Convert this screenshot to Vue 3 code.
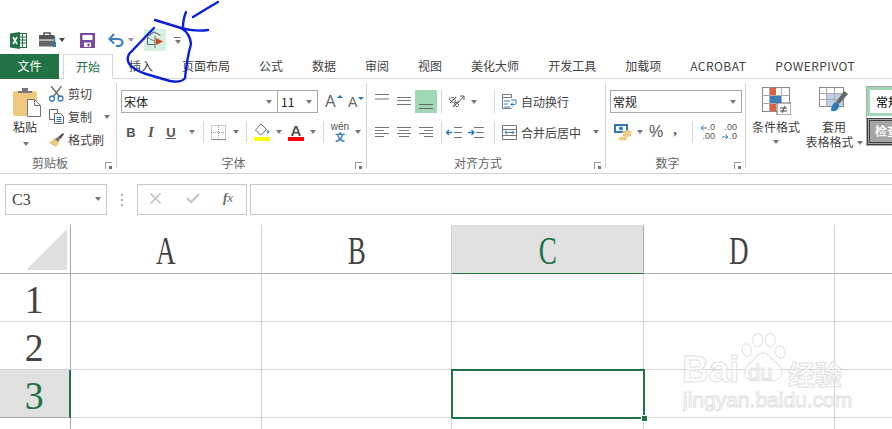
<script setup>
const tabs = ['插入','页面布局','公式','数据','审阅','视图','美化大师','开发工具','加载项','ACROBAT','POWERPIVOT']
const cols = ['A','B','C','D','']
const rows = ['1','2','3','']
const isLatin = (t) => /^[A-Z]+$/.test(t)
</script>

<template>
  <div class="app">
    <div class="qat">
      <svg class="i-excel" width="17" height="17" viewBox="0 0 17 17">
        <rect x="6.5" y="1.5" width="10" height="14" fill="#fff" stroke="#217346"/>
        <path d="M10 5h6M10 8h6M10 11h6M12.500 2v13" stroke="#217346" fill="none"/>
        <path d="M0 1.500 10 0v17L0 15.500z" fill="#217346"/>
        <path d="M3 5l4 7M7 5l-4 7" stroke="#fff" stroke-width="1.600" fill="none"/>
      </svg>
      <svg class="i-tool" width="20" height="16" viewBox="0 0 20 16">
        <path d="M5 3V1h6v2" fill="none" stroke="#555" stroke-width="1.500"/>
        <rect x="0" y="3" width="15" height="4.500" fill="#555"/>
        <rect x="0" y="8.500" width="15" height="6" fill="#666"/>
        <path d="M15.500 4v6" stroke="#2f7ab8" stroke-width="1.500"/>
        <path d="M15.500 10v5" stroke="#2f7ab8" stroke-width="3"/>
      </svg>
      <span class="caret dark c-tool"></span>
      <svg class="i-save" width="15" height="15" viewBox="0 0 15 15">
        <path d="M.5.500h14v14H.500z" fill="#fff" stroke="#7b4a9e"/>
        <path d="M0 0h15v15H0zM2.500 2v5h10V2zM4 9.500V15h7V9.500z" fill="#7b4a9e" fill-rule="evenodd"/>
        <rect x="7.500" y="10.500" width="2" height="3" fill="#7b4a9e"/>
      </svg>
      <svg class="i-undo" width="16" height="14" viewBox="0 0 16 14">
        <path d="M2 6h8c3 0 4.500 1.800 4.500 3.500S13 13 10 13H8" fill="none" stroke="#3f7fb8" stroke-width="2.200"/>
        <path d="M6 1 1.500 6 6 10.500" fill="none" stroke="#3f7fb8" stroke-width="2"/>
      </svg>
      <span class="caret c-undo"></span>
      <span class="macro">
        <svg width="22" height="22" viewBox="0 0 22 22">
          <path d="M3.500 7.500 10 3l6.500 3.500" fill="none" stroke="#777" stroke-width="1.200"/>
          <path d="M3.500 7.500v8h7.500" fill="none" stroke="#666"/>
          <path d="M3.500 8.500 11 12.500" fill="none" stroke="#888"/>
          <path d="M11 7v12" stroke="#666"/>
          <path d="M12 9 19 12.500 12 16z" fill="#d24726"/>
        </svg>
      </span>
      <span class="qat-more"><i></i><span class="caret"></span></span>
    </div>

    <div class="tabbar">
      <span class="file">文件</span>
      <span class="tab active">开始</span>
      <span v-for="t in tabs" :key="t" class="tab" :class="{ latin: isLatin(t) }">{{ t }}</span>
    </div>

    <div class="ribbon">
      <section class="group g1">
        <div class="body clip">
          <div class="paste">
            <svg width="28" height="29" viewBox="0 0 28 29">
              <rect x="0" y="3" width="24" height="25" rx="2" fill="#edc87e"/>
              <path d="M5 5V3h4V0h6v3h4v2z" fill="#777"/>
              <path d="M14.500 11.500h7l6 6v11h-13z" fill="#fff" stroke="#777"/>
              <path d="M21.500 11.500v6h6" fill="none" stroke="#777"/>
            </svg>
            <span class="paste-t">粘贴</span>
            <span class="caret"></span>
          </div>
          <div class="clip-list">
            <div class="clip-row">
              <svg width="15" height="16" viewBox="0 0 15 16">
                <path d="M2 0l9 11M12.500 0 4 11" stroke="#666" stroke-width="1.300" fill="none"/>
                <circle cx="3" cy="12.500" r="2.500" fill="none" stroke="#2f7ab8" stroke-width="1.300"/>
                <circle cx="11.500" cy="12.500" r="2.500" fill="none" stroke="#2f7ab8" stroke-width="1.300"/>
              </svg>
              <span>剪切</span>
            </div>
            <div class="clip-row">
              <svg width="15" height="15" viewBox="0 0 15 15">
                <path d="M.5.500h8v10h-8z" fill="#fff" stroke="#666"/>
                <path d="M5.500 4.500h6l3 3v7h-9z" fill="#fff" stroke="#666"/>
                <path d="M7.500 8.500h5M7.500 10.500h5M7.500 12.500h5" stroke="#2f7ab8"/>
              </svg>
              <span>复制</span>
              <span class="caret c-copy"></span>
            </div>
            <div class="clip-row">
              <svg width="15" height="14" viewBox="0 0 15 14">
                <path d="M0 10 6 5l4 5-3 4z" fill="#edc87e"/>
                <path d="M6 6l3-2 2 3-2 2z" fill="#777"/>
                <path d="M9 4l5-4 1 1.500-4 5z" fill="#555"/>
              </svg>
              <span>格式刷</span>
            </div>
          </div>
        </div>
        <div class="label">剪贴板<span class="launcher"></span></div>
      </section>

      <section class="group g2">
        <div class="body">
          <div class="row r1 pad4">
            <span class="select font-name"><span>宋体</span><span class="caret"></span></span>
            <span class="select font-size"><span>11</span><span class="caret"></span></span>
            <span class="grow-a big">A<i class="up"></i></span>
            <span class="grow-a small">A<i class="down"></i></span>
          </div>
          <div class="row r2 pad4">
            <span class="cell w20 fmt">B</span>
            <span class="cell w20 fmt it">I</span>
            <span class="cell w20 fmt un">U</span>
            <span class="cell w22"><span class="caret"></span></span>
            <i class="sep"></i>
            <span class="cell w28">
              <svg width="15" height="15" viewBox="0 0 15 15">
                <path d="M.5.500h14v14H.500zM7.500 0v15M0 7.500h15" fill="none" stroke="#999" stroke-dasharray="1 1"/>
                <path d="M0 14.500h15" stroke="#888"/>
              </svg>
            </span>
            <span class="cell w8"><span class="caret"></span></span>
            <span class="w6"></span>
            <i class="sep"></i>
            <span class="cell w30">
              <svg width="17" height="19" viewBox="0 0 17 19">
                <path d="M7 1 1.500 7l5 5 6-5.500z" fill="#fff" stroke="#666"/>
                <path d="M13.500 6.500c1.500 2 2 3 1 3.800-1 .7-2-.5-1-3.800" fill="#2f7ab8"/>
                <rect x="0" y="14" width="16" height="4" fill="#ffff00"/>
              </svg>
            </span>
            <span class="cell w4"><span class="caret"></span></span>
            <span class="cell w30 font-color"><b>A</b><i></i></span>
            <span class="cell w4"><span class="caret"></span></span>
            <span class="w8"></span>
            <i class="sep"></i>
            <span class="cell w32 wen"><em>wén</em><b>文</b></span>
            <span class="cell w4"><span class="caret"></span></span>
          </div>
        </div>
        <div class="label">字体<span class="launcher"></span></div>
      </section>

      <section class="group g3">
        <div class="body">
          <div class="row r1">
            <span class="cell w22 al top"><svg width="14" height="14" viewBox="0 0 14 14"><path d="M0 1.500h14M0 6h14" stroke="#777"/></svg></span>
            <span class="cell w22 al"><svg width="14" height="14" viewBox="0 0 14 14"><path d="M0 2.500h14M0 5.500h14M0 9.500h14" stroke="#777"/></svg></span>
            <span class="cell w22 al on"><svg width="14" height="14" viewBox="0 0 14 14"><path d="M0 9.500h14M0 13.500h14" stroke="#666"/></svg></span>
            <span class="w4"></span>
            <i class="sep tall"></i>
            <span class="cell w28">
              <svg width="17" height="15" viewBox="0 0 17 15">
                <path d="M2 9l6-6M5 13l6-6" stroke="#777" stroke-width="1.400" fill="none"/>
                <path d="M1 5l4 4 3-2-3-4zM6 10l3 3 2-2-3-3z" fill="none" stroke="#777"/>
                <path d="M10 9l6-7M12 2h4v4" stroke="#666" fill="none"/>
              </svg>
            </span>
            <span class="cell w8"><span class="caret"></span></span>
            <span class="w16"></span>
            <i class="sep tall"></i>
            <span class="wrap-btn">
              <svg width="15" height="15" viewBox="0 0 15 15">
                <path d="M.5.500h9v3h-9zM.5 3.500v11h9" fill="none" stroke="#777"/>
                <path d="M2 7h6M2 10h4M2 13h6" stroke="#2f7ab8"/>
                <path d="M9 6h5v3c0 1-.5 1.500-1.500 1.500H9M11 8.500l-2 2 2 2" fill="none" stroke="#2f7ab8"/>
              </svg>
              <span>自动换行</span>
            </span>
          </div>
          <div class="row r2">
            <span class="cell w22 al"><svg width="14" height="14" viewBox="0 0 14 14"><path d="M0 2.500h14M0 5.500h9M0 8.500h14M0 11.500h9" stroke="#777"/></svg></span>
            <span class="cell w22 al"><svg width="14" height="14" viewBox="0 0 14 14"><path d="M0 2.500h14M2 5.500h10M0 8.500h14M2 11.500h10" stroke="#777"/></svg></span>
            <span class="cell w22 al"><svg width="14" height="14" viewBox="0 0 14 14"><path d="M0 2.500h14M5 5.500h9M0 8.500h14M5 11.500h9" stroke="#777"/></svg></span>
            <span class="w4"></span>
            <i class="sep tall"></i>
            <span class="cell w24"><svg width="16" height="11" viewBox="0 0 16 11"><path d="M8 .5h8M8 5.500h8M8 10.500h8" stroke="#777"/><path d="M0 5.500h6M3 3 .5 5.500 3 8" fill="none" stroke="#2f7ab8" stroke-width="1.300"/></svg></span>
            <span class="cell w20"><svg width="16" height="11" viewBox="0 0 16 11"><path d="M6 .5h10M8 5.500h8M6 10.500h10" stroke="#777"/><path d="M0 5.500h6M3.500 3 6 5.500 3.500 8" fill="none" stroke="#2f7ab8" stroke-width="1.300"/></svg></span>
            <span class="w8"></span>
            <i class="sep tall"></i>
            <span class="wrap-btn">
              <svg width="15" height="15" viewBox="0 0 15 15">
                <path d="M.5.500h14v14H.500zM0 4.500h15M0 10.500h15" fill="none" stroke="#777"/>
                <path d="M3 7.500h9M5 5.500l-2 2 2 2M10 5.500l2 2-2 2" fill="none" stroke="#2f7ab8"/>
              </svg>
              <span>合并后居中</span>
              <span class="caret c-merge"></span>
            </span>
          </div>
        </div>
        <div class="label">对齐方式<span class="launcher"></span></div>
      </section>

      <section class="group g4">
        <div class="body">
          <div class="row r1 pad4">
            <span class="select num"><span>常规</span><span class="caret"></span></span>
          </div>
          <div class="row r2 pad4">
            <span class="cell w26">
              <svg width="18" height="17" viewBox="0 0 18 17">
                <rect x="0" y="0" width="14" height="9" fill="#2f7ab8"/>
                <rect x="2" y="2" width="10" height="5" fill="#fff"/>
                <circle cx="7" cy="4.500" r="2" fill="#2f7ab8"/>
                <ellipse cx="13" cy="8" rx="4.500" ry="1.800" fill="#edc87e"/>
                <ellipse cx="13" cy="11" rx="4.500" ry="1.800" fill="#edc87e"/>
                <ellipse cx="9" cy="14.500" rx="4.500" ry="1.800" fill="#edc87e"/>
              </svg>
            </span>
            <span class="cell w8"><span class="caret"></span></span>
            <span class="cell w24 pct">%</span>
            <span class="cell w14 comma">,</span>
            <span class="w10"></span>
            <i class="sep"></i>
            <span class="cell w22 dec"><span><svg width="7" height="6" viewBox="0 0 7 6"><path d="M7 3H1M3.500.5 1 3l2.500 2.500" fill="none" stroke="#2f7ab8"/></svg>.0</span><span>.00</span></span>
            <span class="cell w22 dec"><span>.00</span><span><svg width="7" height="6" viewBox="0 0 7 6"><path d="M0 3h6M3.500.5 6 3 3.500 5.500" fill="none" stroke="#2f7ab8"/></svg>.0</span></span>
          </div>
        </div>
        <div class="label">数字<span class="launcher"></span></div>
      </section>

      <section class="styles">
        <div class="style-btn b1">
          <svg width="29" height="28" viewBox="0 0 29 28">
            <rect x=".5" y=".5" width="27" height="24" fill="#fff" stroke="#888"/>
            <path d="M0 8.500h28M0 16.500h28M7.500 0v25M19.500 0v25" stroke="#aaa"/>
            <rect x="8" y="1" width="6" height="7" fill="#e0603a"/>
            <rect x="8" y="9" width="11" height="7" fill="#3f7fb8"/>
            <rect x="8" y="17" width="6" height="7" fill="#e0603a"/>
            <rect x="15" y="16" width="14" height="12" fill="#fff" stroke="#666"/>
            <path d="M18 21h7M18 24h7M23 19l-3 7" stroke="#444" fill="none"/>
          </svg>
          <span>条件格式</span>
          <span class="caret"></span>
        </div>
        <div class="style-btn b2">
          <svg width="30" height="29" viewBox="0 0 30 29">
            <rect x=".5" y=".5" width="24" height="19" fill="#fff" stroke="#888"/>
            <rect x="7" y="6" width="17" height="13" fill="#bdd0e6"/>
            <path d="M0 6.500h24M0 12.500h24M7.500 0v20M15.500 0v20" stroke="#aaa"/>
            <path d="M29 7 20 17l-3-2 8-11z" fill="#666"/>
            <path d="M17 15c-3 1-4 4-5 7-1 3 5 3 7 0 1-2 1-4 1-5z" fill="#2f7ab8"/>
          </svg>
          <span class="l2">套用</span>
          <span>表格格式<span class="caret c-table"></span></span>
        </div>
        <div class="gallery">
          <span class="sw s1">常规</span>
          <span class="sw s2">检查</span>
        </div>
      </section>
    </div>

    <div class="formula">
      <div class="namebox"><span>C3</span><span class="caret"></span></div>
      <span class="dots"><i></i><i></i><i></i></span>
      <div class="fxbox">
        <svg width="11" height="11" viewBox="0 0 11 11"><path d="M.5.500l10 10M10.500.500l-10 10" stroke="#c8c8c8" stroke-width="1.600"/></svg>
        <svg class="fx-check" width="14" height="11" viewBox="0 0 14 11"><path d="M1 5l4 4 8-8" fill="none" stroke="#c8c8c8" stroke-width="2.400"/></svg>
        <em class="fx-t"><b>f</b>x</em>
      </div>
      <div class="input"></div>
    </div>

    <div class="sheet">
      <div class="corner"><i></i></div>
      <div v-for="c in cols" :key="c" class="ch" :class="{ sel: c === 'C' }">
        <span class="glyph">{{ c }}</span>
      </div>
      <template v-for="r in rows" :key="r">
        <div class="rh" :class="{ sel: r === '3' }"><span class="glyph">{{ r }}</span></div>
        <div v-for="c in cols" :key="c + r" class="cd">
          <template v-if="c === 'C' && r === '3'">
            <i class="cursor"></i><i class="handle"></i>
          </template>
        </div>
      </template>
    </div>

    <div class="watermark">
      <span class="wm-bai">Bai</span>
      <svg class="wm-paw" width="46" height="54" viewBox="0 0 50 60">
        <g fill="#fff" fill-opacity=".6" stroke="#e4e4e4" stroke-width="1.300">
          <ellipse cx="7" cy="19" rx="5" ry="7" transform="rotate(-15 7 19)"/>
          <ellipse cx="19" cy="8" rx="5.500" ry="7.500"/>
          <ellipse cx="33" cy="8" rx="5.500" ry="7.500"/>
          <ellipse cx="44" cy="21" rx="5.500" ry="7" transform="rotate(-20 44 21)"/>
          <path d="M25 22c-7 0-9 8-15 12-6 5-8 14 0 18 7 3 11 0 15 0s9 3 16 0c7-4 6-13 0-18-7-4-8-12-16-12z"/>
        </g>
      </svg>
      <span class="wm-du">du</span>
      <span class="wm-cn">经验</span>
      <span class="wm-url">jingyan.baidu.com</span>
    </div>

    <svg class="scribble" width="230" height="90" viewBox="0 0 230 90">
      <g fill="none" stroke="#0a1fd6" stroke-width="2.400" stroke-linecap="round" stroke-linejoin="round">
        <path d="M154 28 129 54Q126 60 130 65 136 71 146 74L170 81Q182 83 185 78 187 58 191 44 190 33 181 28L155 20"/>
        <path d="M181 28Q195 32 208 30"/>
        <path d="M186 12Q183 19 183 28"/>
        <path d="M193 17Q206 9 218 2"/>
      </g>
    </svg>
  </div>
</template>

<style>
html, body { margin: 0; background: #fff; overflow: hidden; }
</style>

<style scoped>
.app { position: relative; width: 892px; height: 429px; overflow: hidden; background: #fff;
  font-family: "Noto Sans CJK SC", "Noto Sans", sans-serif; font-size: 12px; color: #444; }
i, em { font-style: normal; display: block; }

.caret { display: inline-block; width: 0; height: 0; border: 3.5px solid transparent; border-top: 4px solid #777; border-bottom: 0; flex: none; }
.caret.dark { border-top-color: #444; }

.qat { height: 28px; padding-top: 26px; display: flex; align-items: center; padding-left: 10px; }
.i-tool { margin-left: 12px; }
.i-save { margin-left: 15px; }
.i-undo { margin-left: 13px; }
.c-undo { margin-left: 4px; border-top-color: #999; }
.macro { width: 22px; height: 22px; margin-left: 10px; background: #d3f0e0; display: flex; }
.qat-more { margin-left: 8px; display: flex; flex-direction: column; align-items: center; gap: 2px; }
.qat-more i { width: 7px; height: 1px; background: #777; }

.tabbar { height: 25px; display: flex; border-bottom: 1px solid #d4d4d4; box-sizing: border-box; }
.file { width: 59px; background: #217346; color: #fff; text-align: center; line-height: 24px; height: 25px; }
.tab { padding: 0 14.500px; line-height: 23px; white-space: nowrap; }
.tab.latin { letter-spacing: .46px; }
.tab.active { margin-left: 4px; margin-right: 1.500px; padding: 0 12px; color: #217346; background: #fff; height: 25px;
  border: 1px solid #d4d4d4; border-bottom: 0; box-sizing: border-box; }

.ribbon { height: 95px; box-sizing: border-box; padding-top: 4px; display: flex; border-bottom: 1px solid #d4d4d4; }
.group { height: 85px; box-sizing: border-box; border-right: 1px solid #d4d4d4; display: flex; flex-direction: column; flex: none; }
.g1 { width: 117px; } .g2 { width: 250px; } .g3 { width: 239px; } .g4 { width: 140px; }
.body { height: 72px; flex: none; }
.label { position: relative; height: 13px; line-height: 15px; text-align: center; color: #666; padding-right: 16px; }
.launcher { position: absolute; right: 4px; bottom: -1px; width: 6px; height: 6px; border-left: 1px solid #999; border-top: 1px solid #999; }
.launcher::after { content: ""; position: absolute; right: 0; bottom: 0; width: 3px; height: 3px; background: #777; }

.clip { display: flex; }
.paste { width: 49px; box-sizing: border-box; padding: 5px 0 0 13px; display: flex; flex-direction: column; }
.paste-t { margin-top: 1px; line-height: 18px; color: #333; }
.paste .caret { margin: 6px 0 0 10px; }
.clip-list { display: flex; flex-direction: column; margin-top: -1px; }
.clip-row { height: 23px; display: flex; align-items: center; gap: 4px; color: #444; }
.c-copy { margin-left: 8px; }

.row { display: flex; align-items: center; }
.r1 { height: 23px; margin-top: 7px; }
.r2 { height: 22px; margin-top: 8px; }
.pad4 { padding-left: 4px; }

.select { height: 23px; box-sizing: border-box; border: 1px solid #ababab; display: flex; align-items: center; justify-content: space-between; padding: 0 5px 0 2px; color: #222; background: #fff; }
.font-name { width: 157px; }
.font-size { width: 40px; border-left-width: 0; padding-left: 3px; }
.num { width: 132px; }
.grow-a { position: relative; display: block; color: #666; font-family: "Liberation Sans", sans-serif; }
.big { font-size: 16px; margin-left: 7px; width: 23px; }
.small { font-size: 14px; width: 16px; }
.grow-a i { position: absolute; right: 5px; width: 0; height: 0; border: 3px solid transparent; }
.small i { right: 0; }
.up { top: 2px; border-bottom: 3px solid #2f7ab8 !important; border-top: 0 !important; }
.down { top: 3px; border-top: 3px solid #2f7ab8 !important; border-bottom: 0 !important; }

.cell { display: flex; align-items: center; justify-content: center; height: 22px; flex: none; }
.w4 { width: 4px; flex: none; } .w6 { width: 6px; flex: none; } .w8 { width: 8px; flex: none; } .w10 { width: 10px; flex: none; } .w16 { width: 16px; flex: none; }
.w14 { width: 14px; } .w20 { width: 20px; } .w22 { width: 22px; } .w24 { width: 24px; } .w26 { width: 26px; } .w28 { width: 28px; } .w30 { width: 30px; } .w32 { width: 32px; }
.fmt { font-family: "Liberation Sans", sans-serif; font-size: 13px; font-weight: 700; color: #555; }
.it { font-family: "Liberation Serif", serif; font-style: italic; font-size: 15px; }
.un { text-decoration: underline; }
.sep { width: 1px; height: 22px; background: #d8d8d8; flex: none; }
.sep.tall { height: 23px; }
.font-color { flex-direction: column; }
.font-color b { font: 700 15px/13px "Liberation Sans", sans-serif; color: #555; }
.font-color i { width: 16px; height: 4px; background: #f00; }
.wen { flex-direction: column; line-height: 10px; }
.wen em { font: 10px/10px "Liberation Sans", sans-serif; color: #555; }
.wen b { font-size: 10px; line-height: 10px; color: #2f7ab8; }

.g3 .row > .al:first-child { margin-left: 4px; }
.al.top { padding-bottom: 4px; box-sizing: border-box; }
.al.on { background: #a0d8b5; height: 23px; }
.wrap-btn { display: flex; align-items: center; gap: 4px; margin-left: 7px; color: #444; }
.c-merge { margin-left: 8px; }

.pct { font: 400 16px "Liberation Sans", sans-serif; color: #555; }
.comma { font: 700 15px "Liberation Serif", serif; color: #555; padding-bottom: 6px; height: 16px; }
.dec { flex-direction: column; font: 9px/9px "Liberation Sans", sans-serif; color: #555; align-items: flex-end; }
.dec span { display: flex; align-items: center; }

.styles { flex: 1; min-width: 0; display: flex; height: 85px; }
.style-btn { display: flex; flex-direction: column; align-items: center; line-height: 15px; color: #444; flex: none; }
.b1 { width: 58px; padding: 4px 0 0 2px; box-sizing: border-box; }
.b1 span:first-of-type { margin-top: 4px; }
.b1 .caret { margin-top: 6px; }
.b2 { width: 60px; padding-top: 4px; box-sizing: border-box; }
.b2 .l2 { margin-top: 3px; }
.c-table { margin-left: 3px; vertical-align: 2px; }
.gallery { margin: 3px 0 0 2px; width: 40px; height: 60px; box-sizing: border-box; border: 1px solid #aaa; display: flex; flex-direction: column; flex: none; overflow: hidden; }
.sw { display: block; color: #000; white-space: nowrap; }
.s1 { height: 29px; line-height: 24px; border: 3px solid #a0d8b5; box-sizing: border-box; padding-left: 6px; }
.s2 { flex: 1; margin-top: 2px; background: #a5a5a5; border: 3px double #3f3f3f; box-sizing: border-box; color: #fff; line-height: 20px; padding-left: 5px; font-weight: 700; }

.formula { height: 51px; box-sizing: border-box; padding: 10px 0 10px 5px; display: flex; align-items: stretch; }
.namebox { width: 102px; height: 31px; box-sizing: border-box; border: 1px solid #c8c8c8; display: flex; align-items: center; justify-content: space-between; padding: 0 5px 0 6px; font: 16px "Liberation Serif", serif; color: #444; }
.namebox .caret { border-width: 4px 3.500px 0; border-top-color: #777; margin-bottom: 2px; }
.dots { width: 30px; display: flex; flex-direction: column; align-items: center; justify-content: center; gap: 3px; }
.dots i { width: 2px; height: 2px; background: #aaa; }
.fxbox { width: 110px; height: 31px; box-sizing: border-box; border: 1px solid #c8c8c8; display: flex; align-items: center; padding: 0 0 3px 12px; }
.fx-check { margin-left: 25px; }
.fx-t { margin-left: 23px; font: italic 13px "Liberation Serif", serif; color: #666; }
.fx-t b { display: inline; font-weight: 700; }
.input { flex: 1; height: 31px; box-sizing: border-box; margin-left: 3px; border: 1px solid #c8c8c8; border-right: 0; }

.sheet { display: grid; grid-template-columns: 71px 191px 190px 192px 191px 58px; grid-template-rows: 49px 48px 48px 48px 12px; }
.corner { border-right: 1px solid #ababab; border-bottom: 1px solid #ababab; box-sizing: border-box; position: relative; }
.corner i { position: absolute; left: 26px; top: 4px; width: 41px; height: 41px; background: #dfdfdf; clip-path: polygon(100% 0, 100% 100%, 0 100%); }
.ch { border-right: 1px solid #d4d4d4; border-bottom: 1px solid #ababab; box-sizing: border-box; display: flex; align-items: center; justify-content: center; color: #444; padding-top: 2px; }
.ch.sel { background: #e1e1e1; color: #217346; border-bottom-color: #217346; border-right-color: #ababab; }
.ch .glyph { transform: scaleX(.66); }
.rh { border-right: 1px solid #ababab; border-bottom: 1px solid #d4d4d4; box-sizing: border-box; display: flex; align-items: center; justify-content: center; color: #444; padding: 3px 1px 0 0; }
.rh.sel { background: #e1e1e1; color: #217346; border-right: 2px solid #217346; border-bottom-color: #ababab; }
.glyph { display: block; font: 41px/1 "Liberation Serif", serif; }
.rh .glyph { transform: scaleX(.92); }
.cd { border-right: 1px solid #d4d4d4; border-bottom: 1px solid #d4d4d4; box-sizing: border-box; position: relative; }
.cursor { position: absolute; left: -1px; top: -1px; width: 194px; height: 50px; box-sizing: border-box; border: 2px solid #217346; }
.handle { position: absolute; left: 189px; top: 45px; width: 5px; height: 5px; background: #217346; border: 1px solid #fff; z-index: 1; }

.watermark { position: absolute; left: 683px; top: 333px; width: 170px; height: 78px; pointer-events: none; }
.wm-bai, .wm-du, .wm-cn, .wm-url { position: absolute; white-space: nowrap; color: rgba(255,255,255,.5); -webkit-text-stroke: 1px #e2e2e2; font-family: "Liberation Sans", sans-serif; }
.wm-bai { left: -1px; top: 18px; font-size: 37px; font-weight: 700; line-height: 37px; }
.wm-paw { position: absolute; left: 57px; top: 0; }
.wm-du { left: 65px; top: 29px; font-size: 22px; line-height: 22px; }
.wm-cn { left: 105px; top: 26px; font: 700 27px/30px "Noto Sans CJK SC", sans-serif; }
.wm-url { left: 0; top: 56px; font-size: 21px; line-height: 22px; }

.scribble { position: absolute; left: 0; top: 0; pointer-events: none; }
</style>
